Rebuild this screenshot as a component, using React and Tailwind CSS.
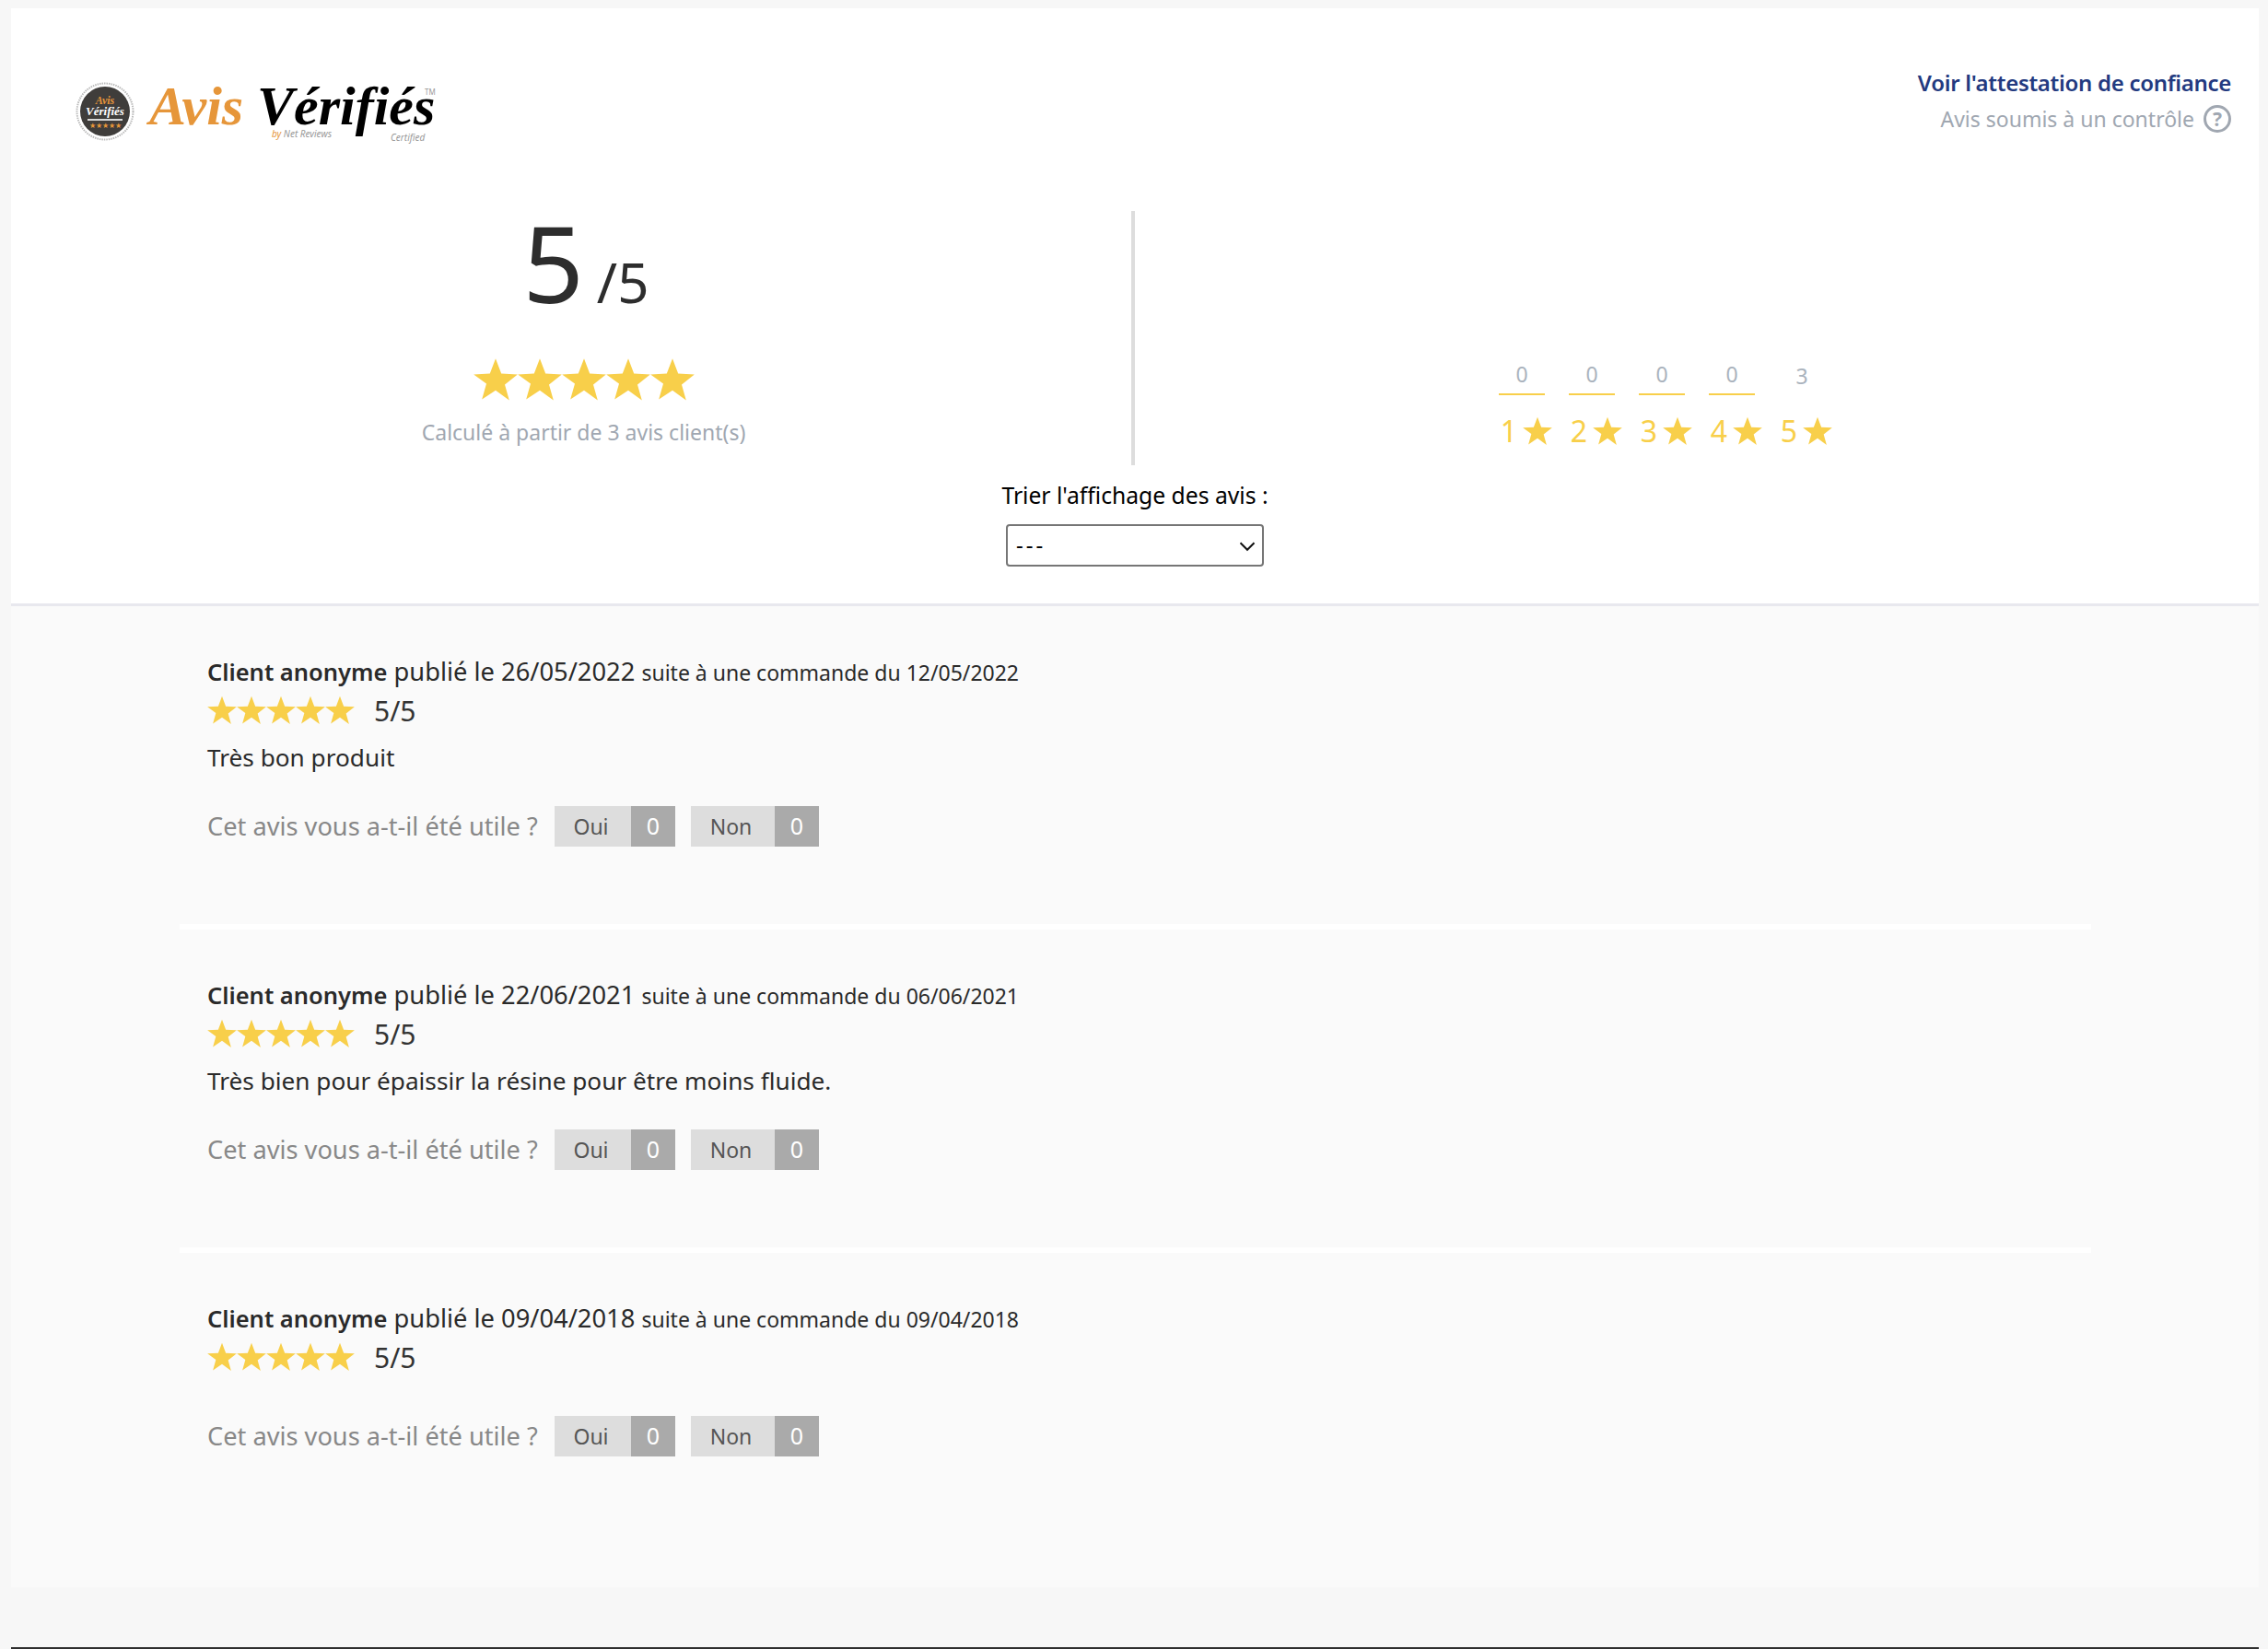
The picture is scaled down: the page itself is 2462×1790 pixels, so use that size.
import React from 'react';

const font = { fontFamily: '"Noto Sans", sans-serif' };

function Star({ className }) {
  return (
    <svg viewBox="0 0 24 24" className={className} fill="#f8cf4a">
      <path d="M12 0.6l3.1 8.2 8.8 0.4-6.9 5.5 2.4 8.6L12 17.9l-7.4 4.9 2.4-8.6L0.1 9.2l8.8-0.4z" />
    </svg>
  );
}

function Logo() {
  return (
    <div className="relative w-[400px] h-[70px]">
      <svg viewBox="0 0 64 64" className="absolute left-0 top-0 w-[64px] h-[64px]">
        <circle cx="32" cy="32" r="30.5" fill="none" stroke="#bbbbbb" strokeWidth="2" strokeDasharray="1.5 1" />
        <circle cx="32" cy="32" r="27" fill="#3f3d3b" />
        <text x="32" y="24" textAnchor="middle" fontSize="12" fontStyle="italic" fontWeight="700" fill="#e6963a" fontFamily="Liberation Serif">Avis</text>
        <text x="32" y="36" textAnchor="middle" fontSize="13" fontStyle="italic" fontWeight="700" fill="#ffffff" fontFamily="Liberation Serif">Vérifiés</text>
        <rect x="13" y="40" width="38" height="2" fill="#d8d8d8" />
        <text x="32" y="50" textAnchor="middle" fontSize="8" fill="#e6963a">★★★★★</text>
      </svg>
      <span className="absolute left-[80px] top-[1px] text-[60px] leading-[50px] font-bold italic text-[#e6963a] whitespace-nowrap" style={{ fontFamily: '"Liberation Serif", serif' }}>Avis</span>
      <span className="absolute left-[197px] top-[1px] text-[60px] leading-[50px] font-bold italic text-black whitespace-nowrap" style={{ fontFamily: '"Liberation Serif", serif' }}>Vérifiés</span>
      <span className="absolute left-[213px] top-[51px] text-[10px] leading-[10px] italic text-[#999] whitespace-nowrap"><span className="text-[#e6963a]">by</span> Net Reviews</span>
      <span className="absolute left-[342px] top-[55px] text-[10px] leading-[10px] italic text-[#999]">Certified</span>
      <span className="absolute left-[379px] top-[6px] text-[8px] leading-[10px] text-[#999]">TM</span>
    </div>
  );
}

function Helpful() {
  return (
    <div className="flex items-center h-[44px]">
      <span className="text-[27.2px] text-[#888888] w-[377px] whitespace-nowrap">Cet avis vous a-t-il été utile ?</span>
      <div className="flex h-[44px] text-[23px] w-[131px]">
        <span className="w-[83px] bg-[#dddddd] text-[#555555] flex items-center justify-center pr-[4px]">Oui</span>
        <span className="w-[48px] bg-[#aaaaaa] text-white text-[25px] flex items-center justify-center">0</span>
      </div>
      <div className="flex h-[44px] text-[23px] ml-[17px]">
        <span className="w-[91px] bg-[#dddddd] text-[#555555] flex items-center justify-center pr-[4px]">Non</span>
        <span className="w-[48px] bg-[#aaaaaa] text-white text-[25px] flex items-center justify-center">0</span>
      </div>
    </div>
  );
}

function Review({ published, ordered, comment, last }) {
  return (
    <div className={last ? 'px-[30px] pt-[53px]' : 'px-[30px] pt-[53px] h-[351px] border-b-[6px] border-white'}>
      <div className="text-[27.3px] leading-[36px] text-[#2a2a2a] whitespace-nowrap">
        <span className="font-semibold text-[25.5px]">Client anonyme</span> publié le {published} <span className="text-[23px]">suite à une commande du {ordered}</span>
      </div>
      <div className="flex items-center h-[38px] mt-[4px]">
        <div className="flex w-[160px]">
          {[0, 1, 2, 3, 4].map((i) => <Star key={i} className="w-[32px] h-[32px]" />)}
        </div>
        <span className="ml-[21px] text-[30px] text-[#333333]">5/5</span>
      </div>
      {comment && <div className="text-[26.2px] leading-[36px] text-[#2a2a2a] mt-[14px]">{comment}</div>}
      <div className={comment ? 'mt-[35px]' : 'mt-[45px]'}>
        <Helpful />
      </div>
    </div>
  );
}

export default function App() {
  const counts = [0, 0, 0, 0, 3];
  return (
    <div className="h-[1790px] bg-[#f7f7f7] pl-[12px] pt-[9px] overflow-hidden" style={font}>
      <div className="w-[2440px] h-[1714px] bg-[#fafafa]">
        <div className="bg-white h-[649px] border-b-[3px] border-[#e8e8ee]">
          <div className="flex justify-between pl-[70px] pr-[30px] pt-[80px] h-[220px]">
            <Logo />
            <div className="text-right -mt-[17px]">
              <div className="text-[24px] leading-[36px] font-semibold tracking-[-0.3px] text-[#233a80]">Voir l'attestation de confiance</div>
              <div className="flex items-center justify-end text-[23px] leading-[36px] text-[#a0a7b1] mt-[3px]">
                Avis soumis à un contrôle
                <span className="ml-[10px] w-[30px] h-[30px] rounded-full border-[3px] border-[#a0a7b1] flex items-center justify-center text-[21px] font-bold">?</span>
              </div>
            </div>
          </div>
          <div className="flex">
            <div className="w-[1216px] pl-[27px] flex flex-col items-center h-[276px]">
              <div className="flex items-baseline text-[#2d2d2d] pl-[5px] -mt-[3px]">
                <span className="text-[116px] leading-[116px]">5</span>
                <span className="text-[60px] leading-[60px] ml-[14px]">/5</span>
              </div>
              <div className="flex mt-[46px]">
                {[0, 1, 2, 3, 4].map((i) => <Star key={i} className="w-[48px] h-[48px]" />)}
              </div>
              <div className="text-[23px] leading-[32px] text-[#a0a7b1] mt-[17px]">Calculé à partir de 3 avis client(s)</div>
            </div>
            <div className="w-[4px] h-[276px] bg-[#dddddd]" />
            <div className="flex-1 h-[276px] pl-[395px] pt-[159px]">
              <div className="flex gap-[26px]">
                {counts.map((c, i) => (
                  <div key={i} className="w-[50px] flex flex-col items-center">
                    <div className={c > 0 ? 'h-[41px] w-full text-center text-[23px] leading-[40px] text-[#aab3bd]' : 'h-[41px] w-full text-center text-[23px] leading-[36px] text-[#aab3bd] border-b-2 border-[#f8cf4a]'}>{c}</div>
                    <div className="flex items-center ml-[10px] text-[32px] leading-[40px] text-[#f8cf4a] mt-[19px] whitespace-nowrap">
                      {i + 1}<Star className="w-[32px] h-[32px] ml-[6px] shrink-0" />
                    </div>
                  </div>
                ))}
              </div>
            </div>
          </div>
          <div className="flex flex-col items-center">
            <div className="text-[24.7px] leading-[34px] text-black mt-[16px]">Trier l'affichage des avis :</div>
            <div className="relative w-[280px] h-[46px] mt-[14px] rounded-[4px] border-2 border-[#767676] bg-white flex items-center pl-[9px] pb-[2px] text-[24px] tracking-[3px] text-black">
              ---
              <svg viewBox="0 0 16 16" className="absolute right-[6px] top-[12px] w-[20px] h-[20px]" fill="none" stroke="#111" strokeWidth="1.6">
                <path d="M2 5l6 6 6-6" />
              </svg>
            </div>
          </div>
        </div>
        <div className="ml-[183px] w-[2075px]">
          <Review published="26/05/2022" ordered="12/05/2022" comment="Très bon produit" />
          <Review published="22/06/2021" ordered="06/06/2021" comment="Très bien pour épaissir la résine pour être moins fluide." />
          <Review published="09/04/2018" ordered="09/04/2018" last />
        </div>
      </div>
      <div className="w-[2440px] h-[3px] bg-[#2f2f2f] mt-[65px]" />
    </div>
  );
}
